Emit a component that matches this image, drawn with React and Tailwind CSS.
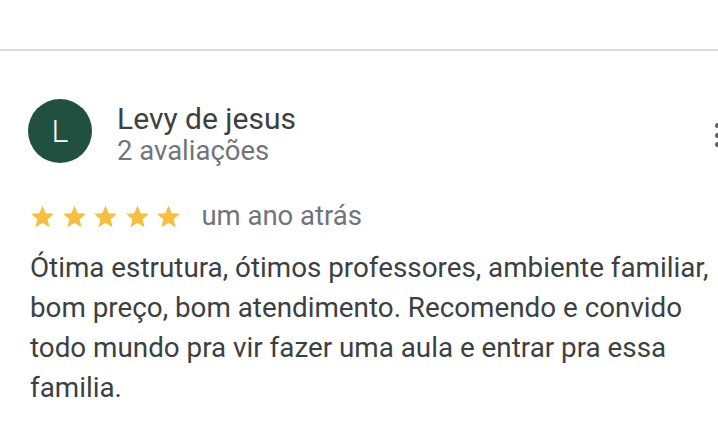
export default function App() {
  const Star = () => (
    <svg width="25" height="25" viewBox="0 0 24 24" className="shrink-0">
      <path d="M12 1.5l3.09 7.26 7.86.68-5.96 5.17 1.79 7.69L12 18.23 5.22 22.3l1.79-7.69L1.05 9.44l7.86-.68z" fill="#f4bf42" />
    </svg>
  );
  return (
    <div className="w-[718px] h-[442px] bg-white overflow-hidden relative" style={{ fontFamily: "Roboto, sans-serif" }}>
      <div className="h-[49px]" />
      <div className="h-[2px] bg-[#dadce0]" />
      <div className="pl-[28px] pt-[48px]">
        <div className="flex items-center h-[64px]">
          <div className="w-[64px] h-[64px] rounded-full bg-[#214f40] flex items-center justify-center text-white text-[32px] font-light leading-none">L</div>
          <div className="ml-[25px] mt-[6px] flex flex-col">
            <div className="text-[30px] leading-[34px] text-[#3c4043]">Levy de jesus</div>
            <div className="text-[27.5px] leading-[30px] text-[#70757a]">2 avaliações</div>
          </div>
        </div>
        <div className="flex items-center h-[30px] mt-[38px] ml-[2px]">
          <div className="flex gap-[6.6px]"><Star /><Star /><Star /><Star /><Star /></div>
          <div className="ml-[20px] text-[27.5px] leading-[30px] text-[#70757a]">um ano atrás</div>
        </div>
        <div className="mt-[17px] ml-[2px] text-[27.8px] leading-[40px] text-[#3c4043] w-[690px]">
          Ótima estrutura, ótimos professores, ambiente familiar, bom preço, bom atendimento. Recomendo e convido todo mundo pra vir fazer uma aula e entrar pra essa familia.
        </div>
      </div>
      <div className="absolute left-[715px] top-[123px] flex flex-col gap-[4.5px]">
        <div className="w-[5px] h-[5px] rounded-full bg-[#5f6368]" />
        <div className="w-[5px] h-[5px] rounded-full bg-[#5f6368]" />
        <div className="w-[5px] h-[5px] rounded-full bg-[#5f6368]" />
      </div>
    </div>
  );
}
